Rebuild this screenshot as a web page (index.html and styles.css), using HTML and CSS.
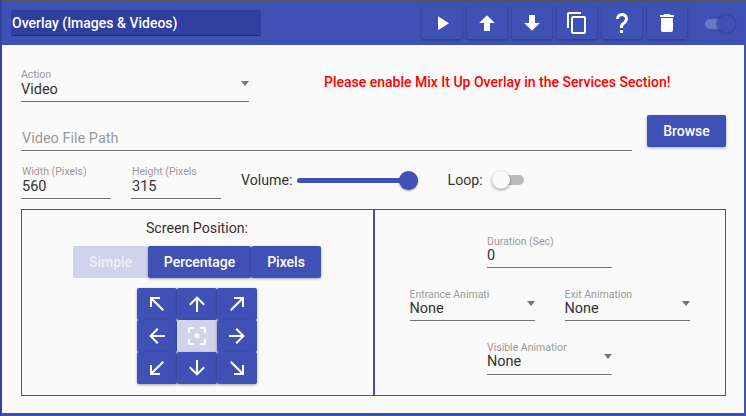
FILE: index.html
```html
<!DOCTYPE html>
<html lang="en">
<head>
  <meta charset="UTF-8" />
  <title>Overlay Action</title>
  <link rel="stylesheet" href="styles.css">
</head>
<body>
  <div class="window">
    <header class="topbar">
      <div class="title-box">Overlay (Images &amp; Videos)</div>
      <div class="tools">
        <button class="tool"><svg viewBox="0 0 24 24" class="i24"><path d="M8,5.14V19.14L19,12.14L8,5.14Z"/></svg></button>
        <button class="tool"><svg viewBox="0 0 24 24" class="i24"><path d="M15,20H9V12H4.16L12,4.16L19.84,12H15V20Z"/></svg></button>
        <button class="tool"><svg viewBox="0 0 24 24" class="i24"><path d="M9,4H15V12H19.84L12,19.84L4.16,12H9V4Z"/></svg></button>
        <button class="tool"><svg viewBox="0 0 24 24" class="i24"><path d="M19,21H8V7H19M19,5H8A2,2 0 0,0 6,7V21A2,2 0 0,0 8,23H19A2,2 0 0,0 21,21V7A2,2 0 0,0 19,5M16,1H4A2,2 0 0,0 2,3V17H4V3H16V1Z"/></svg></button>
        <button class="tool"><svg viewBox="0 0 24 24" class="i24"><path d="M10,19H13V22H10V19M12,2C17.35,2.22 19.68,7.62 16.5,11.67C15.67,12.67 14.33,13.33 13.67,14.17C13,15 13,16 13,17H10C10,15.33 10,13.92 10.67,12.92C11.33,11.92 12.67,11.33 13.5,10.67C15.92,8.43 15.32,5.26 12,5A3,3 0 0,0 9,8H6A6,6 0 0,1 12,2Z"/></svg></button>
        <button class="tool"><svg viewBox="0 0 24 24" class="i24"><path d="M19,4H15.5L14.5,3H9.5L8.5,4H5V6H19M6,19A2,2 0 0,0 8,21H16A2,2 0 0,0 18,19V7H6V19Z"/></svg></button>
      </div>
      <div class="head-toggle"><span class="head-track"></span><span class="head-knob"></span></div>
    </header>

    <main class="content">
      <div class="row-action">
        <div class="field field-action">
          <label>Action</label>
          <div class="value">Video</div>
          <span class="caret"></span>
        </div>
        <div class="warning">Please enable Mix It Up Overlay in the Services Section!</div>
      </div>

      <div class="row-path">
        <div class="field-path">Video File Path</div>
        <button class="browse">Browse</button>
      </div>

      <div class="row-size">
        <div class="field field-size">
          <label>Width (Pixels)</label>
          <div class="value">560</div>
        </div>
        <div class="field field-size">
          <label>Height (Pixels)</label>
          <div class="value">315</div>
        </div>
        <span class="inline-label label-volume">Volume:</span>
        <div class="slider"><span class="thumb"></span></div>
        <span class="inline-label label-loop">Loop:</span>
        <div class="switch"><span class="switch-knob"></span></div>
      </div>

      <div class="panels">
        <section class="panel-left">
          <div class="panel-title">Screen Position:</div>
          <div class="segments">
            <button class="seg seg-simple">Simple</button>
            <button class="seg seg-percent">Percentage</button>
            <button class="seg seg-pixels">Pixels</button>
          </div>
          <div class="pad">
            <button class="cell"><svg viewBox="0 0 24 24" class="i24"><path d="M19,17.59L17.59,19L7,8.41V15H5V5H15V7H8.41L19,17.59Z"/></svg></button>
            <button class="cell"><svg viewBox="0 0 24 24" class="i24"><path d="M13,20H11V8L5.5,13.5L4.08,12.08L12,4.16L19.92,12.08L18.5,13.5L13,8V20Z"/></svg></button>
            <button class="cell"><svg viewBox="0 0 24 24" class="i24"><path d="M5,17.59L15.59,7H9V5H19V15H17V8.41L6.41,19L5,17.59Z"/></svg></button>
            <button class="cell"><svg viewBox="0 0 24 24" class="i24"><path d="M20,11V13H8L13.5,18.5L12.08,19.92L4.16,12L12.08,4.08L13.5,5.5L8,11H20Z"/></svg></button>
            <button class="cell cell-off"><svg viewBox="0 0 24 24" class="i24"><circle cx="12" cy="12" r="2.4"/><path d="M19,19H15V21H19A2,2 0 0,0 21,19V15H19M19,3H15V5H19V9H21V5A2,2 0 0,0 19,3M5,5H9V3H5A2,2 0 0,0 3,5V9H5M5,15H3V19A2,2 0 0,0 5,21H9V19H5V15Z"/></svg></button>
            <button class="cell"><svg viewBox="0 0 24 24" class="i24"><path d="M4,11V13H16L10.5,18.5L11.92,19.92L19.84,12L11.92,4.08L10.5,5.5L16,11H4Z"/></svg></button>
            <button class="cell"><svg viewBox="0 0 24 24" class="i24"><path d="M19,6.41L17.59,5L7,15.59V9H5V19H15V17H8.41L19,6.41Z"/></svg></button>
            <button class="cell"><svg viewBox="0 0 24 24" class="i24"><path d="M11,4H13V16L18.5,10.5L19.92,11.92L12,19.84L4.08,11.92L5.5,10.5L11,16V4Z"/></svg></button>
            <button class="cell"><svg viewBox="0 0 24 24" class="i24"><path d="M5,6.41L6.41,5L17,15.59V9H19V19H9V17H15.59L5,6.41Z"/></svg></button>
          </div>
        </section>

        <section class="panel-right">
          <div class="field field-anim">
            <label>Duration (Sec)</label>
            <div class="value">0</div>
          </div>
          <div class="anim-row">
            <div class="field field-anim">
              <label>Entrance Animation</label>
              <div class="value">None</div>
              <span class="caret"></span>
            </div>
            <div class="field field-anim">
              <label>Exit Animation</label>
              <div class="value">None</div>
              <span class="caret"></span>
            </div>
          </div>
          <div class="field field-anim field-visible">
            <label>Visible Animation</label>
            <div class="value">None</div>
            <span class="caret"></span>
          </div>
        </section>
      </div>
    </main>
  </div>
</body>
</html>
```

FILE: styles.css
```css
* {
  box-sizing: border-box;
}
body {
  margin: 0;
  font-family: "Roboto", "Liberation Sans", sans-serif;
  background: #fafafa;
  color: #333;
}
button {
  font-family: inherit;
  border: none;
  padding: 0;
  color: white;
  background: #3f51b5;
}
.window {
  width: 746px;
  height: 416px;
  display: flex;
  flex-direction: column;
  border-left: 2px solid #34439f;
  border-right: 2px solid #3f51b5;
  border-bottom: 1px solid #555;
  border-top: 1px solid #555;
  box-shadow: inset 0 -2px 0 #3f51b5;
}
.topbar {
  height: 44px;
  background: #3f51b5;
  display: flex;
  align-items: flex-start;
  padding-left: 9px;
  flex: none;
}
.title-box {
  width: 250px;
  height: 26px;
  margin-top: 9px;
  background: #303f9f;
  border-bottom: 1px solid #1f2a70;
  color: white;
  font-size: 14px;
  font-weight: 500;
  line-height: 26px;
  padding-left: 1px;
}
.tools {
  display: flex;
  gap: 5px;
  margin-left: 161px;
  margin-top: 6px;
}
.tool {
  width: 40px;
  height: 32px;
  border-radius: 2px;
  box-shadow: 0 1px 3px rgba(0,0,0,0.35);
  display: flex;
  align-items: center;
  justify-content: center;
}
.i24 {
  width: 24px;
  height: 24px;
  fill: white;
}
.head-toggle {
  position: relative;
  width: 30px;
  height: 20px;
  margin-left: 18px;
  margin-top: 13px;
}
.head-track {
  position: absolute;
  left: 0;
  top: 5px;
  width: 28px;
  height: 10px;
  border-radius: 5px;
  background: #6a78c6;
}
.head-knob {
  position: absolute;
  left: 12px;
  top: 1px;
  width: 18px;
  height: 18px;
  border-radius: 50%;
  background: #3f51b5;
  box-shadow: 0 0 3px rgba(0,0,0,0.45);
}
.content {
  flex: 1;
  padding: 0 18px 0 19px;
}
.field {
  position: relative;
  border-bottom: 1px solid #757575;
}
.field label {
  display: block;
  font-size: 10.5px;
  line-height: 13px;
  color: #9a9a9a;
  white-space: nowrap;
  overflow: hidden;
}
.value {
  font-size: 14.5px;
  line-height: 18px;
  color: #333;
}
.caret {
  position: absolute;
  right: 0;
  top: 13px;
  border-left: 4.5px solid transparent;
  border-right: 4.5px solid transparent;
  border-top: 5px solid #757575;
}
.row-action {
  display: flex;
  height: 57px;
  padding-top: 23px;
}
.field-action {
  width: 228px;
  height: 34px;
}
.warning {
  margin-left: 75px;
  margin-top: 6px;
  color: #f00;
  font-size: 14px;
  font-weight: 500;
  white-space: nowrap;
}
.row-path {
  display: flex;
  align-items: flex-start;
  height: 48px;
  padding-top: 12px;
  margin-top: 1px;
}
.field-path {
  width: 611px;
  height: 36px;
  padding-top: 15px;
  border-bottom: 1px solid #757575;
  font-size: 14.5px;
  color: #9a9a9a;
  padding-left: 1px;
}
.browse {
  width: 79px;
  height: 32px;
  margin-left: 15px;
  border-radius: 2px;
  box-shadow: 0 1px 3px rgba(0,0,0,0.35);
  font-size: 14px;
  font-weight: 500;
}
.row-size {
  display: flex;
  align-items: center;
  height: 58px;
}
.field-size {
  width: 90px;
  height: 34px;
  padding-left: 1px;
  margin-right: 20px;
  margin-top: 4px;
}
.field-size label {
  width: 65px;
}
.inline-label {
  font-size: 14.2px;
}
.label-volume {
  margin-right: 5px;
}
.slider {
  position: relative;
  width: 121px;
  height: 5px;
  border-radius: 3px;
  background: #3f51b5;
}
.thumb {
  position: absolute;
  right: 0;
  top: -7px;
  width: 19px;
  height: 19px;
  border-radius: 50%;
  background: #3f51b5;
  box-shadow: 0 1px 2px rgba(0,0,0,0.35);
}
.label-loop {
  margin-left: 29px;
  margin-right: 9px;
}
.switch {
  position: relative;
  width: 32px;
  height: 10px;
  border-radius: 5px;
  background: #bdbdbd;
}
.switch-knob {
  position: absolute;
  left: 0;
  top: -4px;
  width: 18px;
  height: 18px;
  border-radius: 50%;
  background: #fafafa;
  box-shadow: 0 1px 3px rgba(0,0,0,0.45);
}
.panels {
  display: flex;
  width: 705px;
  height: 187px;
  border: 1px solid #3f51b5;
}
.panel-left {
  width: 353px;
  display: flex;
  flex-direction: column;
  align-items: center;
  padding-right: 1px;
  border-right: 2px solid #3f51b5;
  flex: none;
}
.panel-title {
  font-size: 14.2px;
  line-height: 16px;
  margin-top: 10px;
}
.segments {
  display: flex;
  margin-top: 10px;
}
.seg {
  height: 32px;
  font-size: 14px;
  font-weight: 500;
  border-radius: 2px;
  box-shadow: 0 1px 3px rgba(0,0,0,0.35);
}
.seg-simple {
  width: 75px;
  background: #cfd4ea;
  color: #eef0f8;
  box-shadow: none;
}
.seg-percent {
  width: 103px;
}
.seg-pixels {
  width: 70px;
}
.pad {
  display: grid;
  grid-template-columns: repeat(3, 40px);
  grid-auto-rows: 32px;
  margin-top: 10px;
}
.cell {
  display: flex;
  align-items: center;
  justify-content: center;
  border-radius: 2px;
  box-shadow: 0 1px 3px rgba(0,0,0,0.35);
}
.cell-off {
  background: #cfd4ea;
}
.panel-right {
  flex: 1;
  display: flex;
  flex-direction: column;
  align-items: center;
  padding-top: 25px;
  padding-right: 1px;
}
.field-anim {
  width: 125px;
  height: 33px;
}
.field-anim label {
  width: 80px;
}
.field-anim .value {
  line-height: 16px;
}
.field-visible {
  height: 34px;
}
.anim-row {
  display: flex;
  gap: 30px;
  margin: 20px 0;
}
```
